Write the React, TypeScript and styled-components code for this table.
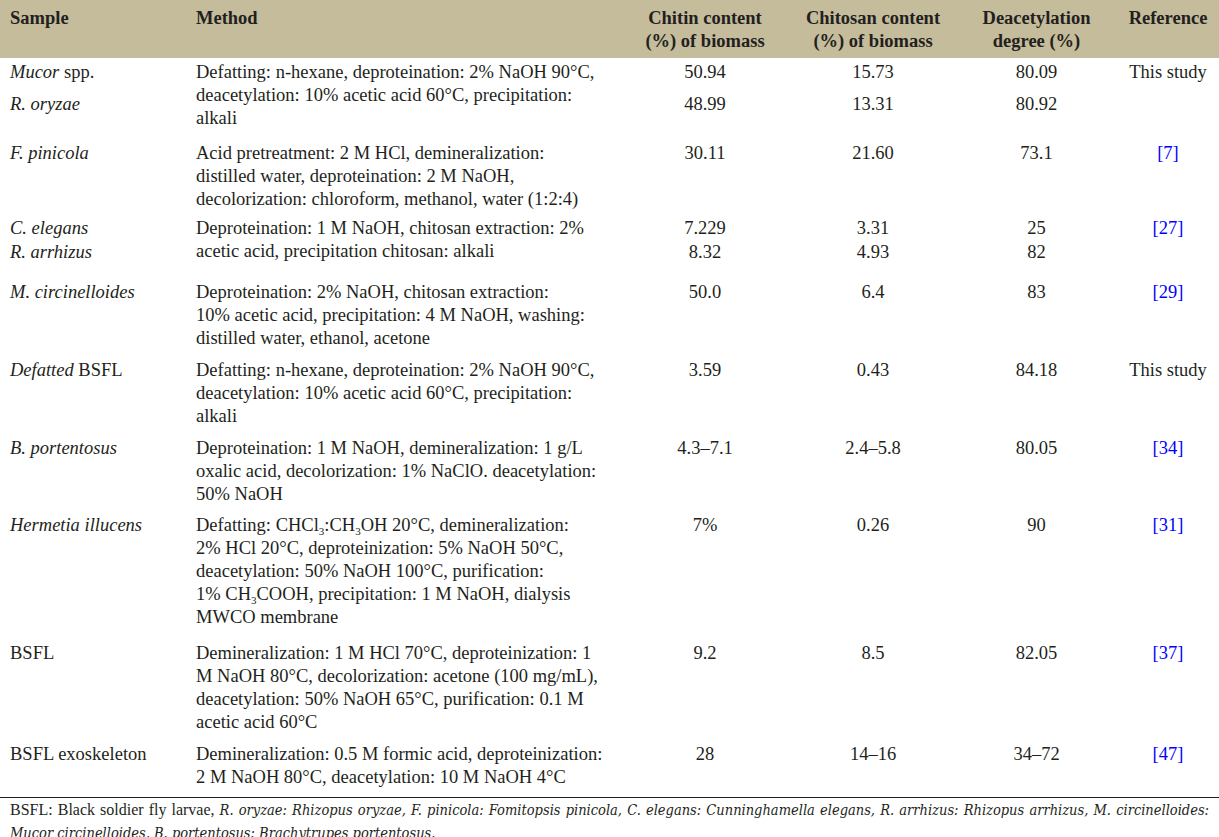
import React from "react";
import styled, { createGlobalStyle } from "styled-components";

const Global = createGlobalStyle`
  html, body { margin: 0; padding: 0; background: #ffffff; }
  body {
    font-family: "Liberation Serif", "Times New Roman", Tinos, "DejaVu Serif", serif;
    color: #231f20;
  }
`;

const Table = styled.div`
  width: 1219px;
  font-family: "Liberation Serif", "Times New Roman", Tinos, "DejaVu Serif", serif;
  font-size: 18.5px;
  line-height: 23px;
`;

const cols = "186px 434px 170px 166px 161px 102px";

const HeadRow = styled.div`
  display: grid;
  grid-template-columns: ${cols};
  height: 58px;
  box-sizing: border-box;
  padding-top: 7px;
  background: #c4bc9b;
  font-weight: bold;
`;

const HeadCell = styled.div<{ $center?: boolean }>`
  padding: 0 10px;
  text-align: ${(p) => (p.$center ? "center" : "left")};
  white-space: nowrap;
`;

const Row = styled.div<{ $pt: number; $pb: number }>`
  display: grid;
  grid-template-columns: ${cols};
  padding-top: ${(p) => p.$pt}px;
  padding-bottom: ${(p) => p.$pb}px;
`;

const Cell = styled.div<{ $center?: boolean }>`
  padding: 0 10px;
  text-align: ${(p) => (p.$center ? "center" : "left")};
  white-space: nowrap;
`;

const Line = styled.div<{ $mt?: number }>`
  margin-top: ${(p) => p.$mt ?? 0}px;
`;

const Ref = styled.span`
  color: #0000ff;
`;

const Sub = styled.sub`
  font-size: 11px;
  line-height: 0;
  vertical-align: -4px;
`;

const Footer = styled.div`
  border-top: 1.5px solid #231f20;
  padding: 1px 10px 0 10px;
  font-size: 16px;
  line-height: 21.5px;
`;

const FootLine = styled.div<{ $justify?: boolean }>`
  text-align: ${(p) => (p.$justify ? "justify" : "left")};
  text-align-last: ${(p) => (p.$justify ? "justify" : "left")};
  white-space: nowrap;
`;

const FootIt = styled.i`
  font-family: "DejaVu Serif Condensed", "DejaVu Serif", serif;
  font-size: 14.5px;
`;

type RowData = {
  sample: React.ReactNode[];
  sampleGap?: number;
  method: React.ReactNode[];
  chitin: string[];
  chitosan: string[];
  deac: string[];
  ref: React.ReactNode;
  pt: number;
  pb: number;
};

const rows: RowData[] = [
  {
    sample: [<><i>Mucor</i> spp.</>, <i>R. oryzae</i>],
    sampleGap: 9,
    method: [
      "Defatting: n-hexane, deproteination: 2% NaOH 90°C,",
      "deacetylation: 10% acetic acid 60°C, precipitation:",
      "alkali",
    ],
    chitin: ["50.94", "48.99"],
    chitosan: ["15.73", "13.31"],
    deac: ["80.09", "80.92"],
    ref: "This study",
    pt: 3,
    pb: 8,
  },
  {
    sample: [<i>F. pinicola</i>],
    method: [
      "Acid pretreatment: 2 M HCl, demineralization:",
      "distilled water, deproteination: 2 M NaOH,",
      "decolorization: chloroform, methanol, water (1:2:4)",
    ],
    chitin: ["30.11"],
    chitosan: ["21.60"],
    deac: ["73.1"],
    ref: <Ref>[7]</Ref>,
    pt: 4,
    pb: 2,
  },
  {
    sample: [<i>C. elegans</i>, <i>R. arrhizus</i>],
    sampleGap: 1,
    method: [
      "Deproteination: 1 M NaOH, chitosan extraction: 2%",
      "acetic acid, precipitation chitosan: alkali",
    ],
    chitin: ["7.229", "8.32"],
    chitosan: ["3.31", "4.93"],
    deac: ["25", "82"],
    ref: <Ref>[27]</Ref>,
    pt: 4,
    pb: 13,
  },
  {
    sample: [<i>M. circinelloides</i>],
    method: [
      "Deproteination: 2% NaOH, chitosan extraction:",
      "10% acetic acid, precipitation: 4 M NaOH, washing:",
      "distilled water, ethanol, acetone",
    ],
    chitin: ["50.0"],
    chitosan: ["6.4"],
    deac: ["83"],
    ref: <Ref>[29]</Ref>,
    pt: 4,
    pb: 5,
  },
  {
    sample: [<><i>Defatted</i> BSFL</>],
    method: [
      "Defatting: n-hexane, deproteination: 2% NaOH 90°C,",
      "deacetylation: 10% acetic acid 60°C, precipitation:",
      "alkali",
    ],
    chitin: ["3.59"],
    chitosan: ["0.43"],
    deac: ["84.18"],
    ref: "This study",
    pt: 4,
    pb: 5,
  },
  {
    sample: [<i>B. portentosus</i>],
    method: [
      "Deproteination: 1 M NaOH, demineralization: 1 g/L",
      "oxalic acid, decolorization: 1% NaClO. deacetylation:",
      "50% NaOH",
    ],
    chitin: ["4.3–7.1"],
    chitosan: ["2.4–5.8"],
    deac: ["80.05"],
    ref: <Ref>[34]</Ref>,
    pt: 4,
    pb: 4,
  },
  {
    sample: [<i>Hermetia illucens</i>],
    method: [
      <>Defatting: CHCl<Sub>3</Sub>:CH<Sub>3</Sub>OH 20°C, demineralization:</>,
      "2% HCl 20°C, deproteinization: 5% NaOH 50°C,",
      "deacetylation: 50% NaOH 100°C, purification:",
      <>1% CH<Sub>3</Sub>COOH, precipitation: 1 M NaOH, dialysis</>,
      "MWCO membrane",
    ],
    chitin: ["7%"],
    chitosan: ["0.26"],
    deac: ["90"],
    ref: <Ref>[31]</Ref>,
    pt: 4,
    pb: 9,
  },
  {
    sample: ["BSFL"],
    method: [
      "Demineralization: 1 M HCl 70°C, deproteinization: 1",
      "M NaOH 80°C, decolorization: acetone (100 mg/mL),",
      "deacetylation: 50% NaOH 65°C, purification: 0.1 M",
      "acetic acid 60°C",
    ],
    chitin: ["9.2"],
    chitosan: ["8.5"],
    deac: ["82.05"],
    ref: <Ref>[37]</Ref>,
    pt: 4,
    pb: 5,
  },
  {
    sample: ["BSFL exoskeleton"],
    method: [
      "Demineralization: 0.5 M formic acid, deproteinization:",
      "2 M NaOH 80°C, deacetylation: 10 M NaOH 4°C",
    ],
    chitin: ["28"],
    chitosan: ["14–16"],
    deac: ["34–72"],
    ref: <Ref>[47]</Ref>,
    pt: 4,
    pb: 8,
  },
];

const Lines: React.FC<{ items: React.ReactNode[]; gap?: number }> = ({ items, gap }) => (
  <>
    {items.map((it, i) => (
      <Line key={i} $mt={i > 0 ? gap ?? 0 : 0}>
        {it}
      </Line>
    ))}
  </>
);

export default function App() {
  return (
    <>
      <Global />
      <Table>
        <HeadRow>
          <HeadCell>Sample</HeadCell>
          <HeadCell>Method</HeadCell>
          <HeadCell $center>
            Chitin content
            <br />
            (%) of biomass
          </HeadCell>
          <HeadCell $center>
            Chitosan content
            <br />
            (%) of biomass
          </HeadCell>
          <HeadCell $center>
            Deacetylation
            <br />
            degree (%)
          </HeadCell>
          <HeadCell $center>Reference</HeadCell>
        </HeadRow>
        {rows.map((r, i) => (
          <Row key={i} $pt={r.pt} $pb={r.pb}>
            <Cell>
              <Lines items={r.sample} gap={r.sampleGap} />
            </Cell>
            <Cell>
              <Lines items={r.method} />
            </Cell>
            <Cell $center>
              <Lines items={r.chitin} gap={r.sampleGap} />
            </Cell>
            <Cell $center>
              <Lines items={r.chitosan} gap={r.sampleGap} />
            </Cell>
            <Cell $center>
              <Lines items={r.deac} gap={r.sampleGap} />
            </Cell>
            <Cell $center>{r.ref}</Cell>
          </Row>
        ))}
        <Footer>
          <FootLine $justify>
            BSFL: Black soldier fly larvae, <FootIt>R. oryzae: Rhizopus oryzae, F. pinicola: Fomitopsis pinicola, C. elegans: Cunninghamella elegans, R. arrhizus: Rhizopus arrhizus, M. circinelloides:</FootIt>
          </FootLine>
          <FootLine>
            <FootIt>Mucor circinelloides, B. portentosus: Brachytrupes portentosus.</FootIt>
          </FootLine>
        </Footer>
      </Table>
    </>
  );
}
